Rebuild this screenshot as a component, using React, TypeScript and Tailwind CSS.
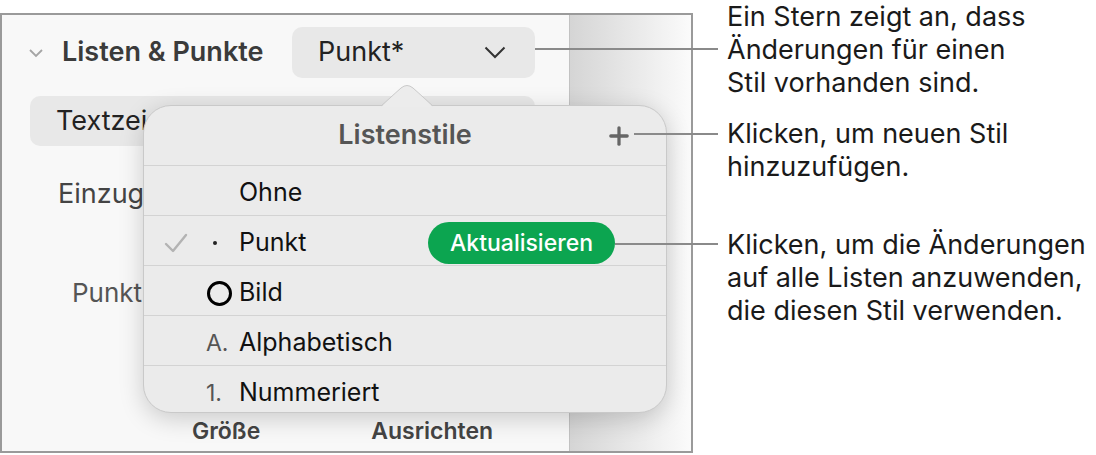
import { Plus } from 'lucide-react';

const rows = [
  { label: 'Ohne', marker: null as string | null, checked: false, update: false },
  { label: 'Punkt', marker: 'dot', checked: true, update: true },
  { label: 'Bild', marker: 'ring', checked: false, update: false },
  { label: 'Alphabetisch', marker: 'A.', checked: false, update: false },
  { label: 'Nummeriert', marker: '1.', checked: false, update: false },
];

const Marker = ({ kind }: { kind: string | null }) => {
  if (!kind) return null;
  if (kind === 'dot')
    return <span className="ml-[7px] block h-[4px] w-[4px] rounded-full bg-[#222]" />;
  if (kind === 'ring')
    return (
      <span className="ml-[1px] block h-[25px] w-[25px] rounded-full border-[3.5px] border-black" />
    );
  return <span className="text-[23px] text-[#555]">{kind}</span>;
};

const Popover = () => (
  <div className="absolute left-[141px] top-[90px] h-[308px] w-[524px] rounded-[28px] border border-[#c9c9c9] bg-[#ebebeb] shadow-[0_6px_24px_rgba(0,0,0,0.18)]">
    <svg
      className="absolute -top-[22px] left-[237px]"
      width="52"
      height="24"
      viewBox="0 0 52 24"
    >
      <path d="M0 23 L20 4 Q26 -1 32 4 L52 23 Z" fill="#ececec" />
      <path d="M0 22 L20 4 Q26 -1 32 4 L52 22" fill="none" stroke="#c9c9c9" strokeWidth="1" />
    </svg>

    <div className="relative flex h-[59px] items-center justify-center">
      <span className="text-[27px] font-semibold text-[#555]">Listenstile</span>
      <Plus className="absolute right-[33px] text-[#666]" size={28} strokeWidth={2.8} />
    </div>

    {rows.map((row) => (
      <div
        key={row.label}
        className="flex h-[50px] items-center border-t border-[#d3d3d3] pt-[5px] text-[25px] text-[#111]"
      >
        <div className="w-[62px] pl-[20px]">
          {row.checked && (
            <svg width="24" height="20" viewBox="0 0 24 20">
              <path
                d="M2 11 L9 18 L22 2"
                fill="none"
                stroke="#b3b3b3"
                strokeWidth="2.4"
                strokeLinecap="round"
                strokeLinejoin="round"
              />
            </svg>
          )}
        </div>
        <div className="flex w-[33px] items-center">
          <Marker kind={row.marker} />
        </div>
        <span>{row.label}</span>
        {row.update && (
          <button className="ml-auto mr-[51px] h-[42px] w-[187px] rounded-full bg-[#0ca550] text-[23px] font-medium text-white">
            Aktualisieren
          </button>
        )}
      </div>
    ))}
  </div>
);

export default function App() {
  return (
    <div className="relative flex h-[455px] w-[1096px] bg-white font-[Inter,sans-serif]">
      <div className="relative mt-[13px] flex h-[440px] w-[693px] shrink-0 border-2 border-[#9a9a9a]">
        <div className="flex w-[567px] flex-col bg-[#f8f8f8]">
          <div className="mt-[12px] flex h-[51px] items-center">
            <svg className="ml-[26px]" width="16" height="10" viewBox="0 0 16 10">
              <path d="M2 2 L8 8 L14 2" fill="none" stroke="#a5a5a5" strokeWidth="1.8" />
            </svg>
            <span className="ml-[18px] text-[27px] font-semibold text-[#3b3b3b]">
              Listen &amp; Punkte
            </span>
            <div className="ml-auto mr-[34px] flex h-full w-[243px] items-center justify-between rounded-[10px] bg-[#e8e8e8] pl-[26px] pr-[29px]">
              <span className="text-[27px] text-[#222]">Punkt*</span>
              <svg width="22" height="13" viewBox="0 0 22 13">
                <path d="M1.5 1.5 L11 11 L20.5 1.5" fill="none" stroke="#333" strokeWidth="2" />
              </svg>
            </div>
          </div>

          <div className="ml-[28px] mr-[34px] mt-[18px] flex h-[50px] items-center rounded-[10px] bg-[#e8e8e8] pl-[26px] text-[27px] text-[#222]">
            Textzeichen
          </div>

          <div className="mt-[24px] flex h-[48px] items-center pl-[56px] text-[27px] text-[#444]">
            Einzug
          </div>

          <div className="mt-[50px] flex h-[48px] items-center pl-[70px] text-[26px] text-[#555]">
            Punkt
          </div>

          <div className="mt-auto flex h-[40px] items-center text-[23px] font-semibold text-[#444]">
            <span className="ml-[190px]">Größe</span>
            <span className="ml-[111px]">Ausrichten</span>
          </div>
        </div>
        <div className="w-px bg-[#c2c2c2]" />
        <div className="flex-1 bg-linear-to-r from-[#d5d5d5] to-[#fbfbfb]" />

        <Popover />
      </div>

      <div className="ml-[34px] flex flex-col text-[27px] leading-[33px] text-[#1a1a1a]">
        <p>
          Ein Stern zeigt an, dass
          <br />
          Änderungen für einen
          <br />
          Stil vorhanden sind.
        </p>
        <p className="mt-[18px]">
          Klicken, um neuen Stil
          <br />
          hinzuzufügen.
        </p>
        <p className="mt-[45px]">
          Klicken, um die Änderungen
          <br />
          auf alle Listen anzuwenden,
          <br />
          die diesen Stil verwenden.
        </p>
      </div>

      <div className="absolute left-[535px] top-[48px] h-[2px] w-[183px] bg-[#8a8a8a]" />
      <div className="absolute left-[634px] top-[133px] h-[2px] w-[84px] bg-[#8a8a8a]" />
      <div className="absolute left-[615px] top-[243px] h-[2px] w-[103px] bg-[#8a8a8a]" />
    </div>
  );
}
